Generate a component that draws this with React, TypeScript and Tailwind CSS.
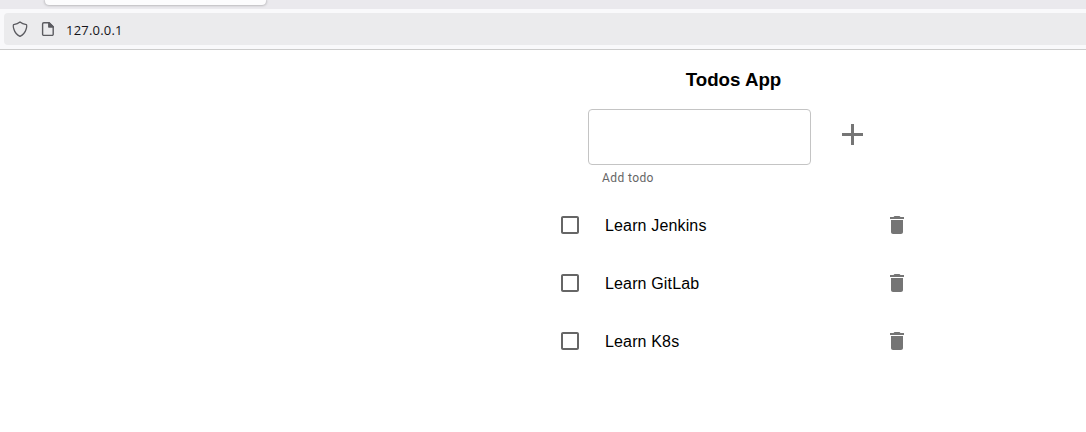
import React, { useState } from "react";

const initialTodos = ["Learn Jenkins", "Learn GitLab", "Learn K8s"];

function BrowserBar() {
  return (
    <header className="h-[50px] border-b border-[#cccccc] bg-[#f9f9fb]">
      <div className="flex h-[9px] bg-[#eae9ed] pl-[45px]">
        <div className="h-[5px] w-[221px] rounded-b-[4px] bg-[#fcfcfd] shadow-[0_0_3px_rgba(0,0,0,0.4)]" />
      </div>
      <div className="mt-1 ml-1 flex h-8 items-center rounded-l-[4px] bg-[#ebebed] pl-2">
        <svg className="h-4 w-4" viewBox="0 0 16 16" fill="none" stroke="#5b5b60" strokeWidth="1.3" strokeLinejoin="round">
          <path d="M8 .9C6.200 2.500 4.200 3.200 1.700 3.600C1.100 4.100 1.400 6.600 2 8.500c.9 3.100 3 5.500 6 6.900c3-1.400 5.100-3.800 6-6.900c.6-1.900.9-4.400.3-4.900C11.800 3.200 9.800 2.500 8 .9Z" />
        </svg>
        <svg className="ml-3 h-4 w-4" viewBox="0 0 16 16" fill="none" stroke="#5b5b60" strokeWidth="1.4" strokeLinejoin="round">
          <path d="M3.800 1.700h5.400l4 4v7.500a1.200 1.200 0 0 1-1.200 1.200H3.800a1.200 1.200 0 0 1-1.200-1.200V2.900a1.200 1.200 0 0 1 1.200-1.200Z" />
          <path d="M8.800 1.700v4.400h4.400Z" fill="#5b5b60" />
        </svg>
        <span className="mt-[3px] ml-[10px] font-['Open_Sans',sans-serif] text-[13px] tracking-[0.2px] text-[#15141a]">127.0.0.1</span>
      </div>
    </header>
  );
}

function TodoRow({ label }: { label: string }) {
  const [done, setDone] = useState(false);
  return (
    <li className="flex h-[58px] items-center">
      <button aria-label={label} onClick={() => setDone(!done)} className="h-6 w-6">
        <svg viewBox="0 0 24 24" fill="#666666">
          <path d="M19 5v14H5V5h14m0-2H5c-1.100 0-2 .900-2 2v14c0 1.100.900 2 2 2h14c1.100 0 2-.900 2-2V5c0-1.100-.900-2-2-2z" />
          {done && <path d="m10 17-5-5 1.400-1.400L10 14.200l7.600-7.600L19 8z" />}
        </svg>
      </button>
      <span className="mt-[2px] ml-[23px] w-[280px] text-[16px] tracking-[0.15px]">{label}</span>
      <button aria-label="Delete" className="h-6 w-6">
        <svg viewBox="0 0 24 24" fill="#757575">
          <path d="M6 19c0 1.100.900 2 2 2h8c1.100 0 2-.900 2-2V7H6v12zM19 4h-3.500l-1-1h-5l-1 1H5v2h14V4z" />
        </svg>
      </button>
    </li>
  );
}

export default function App() {
  return (
    <div className="h-[432px] overflow-hidden bg-white font-['Liberation_Sans',Arial,sans-serif] text-black">
      <BrowserBar />
      <main className="ml-[558px] w-[351px]">
        <h1 className="pt-[18px] text-center text-[18.72px] leading-6 font-bold">Todos App</h1>
        <div className="mt-[17px] ml-[30px] flex items-start">
          <div>
            <input aria-label="Add todo" className="block h-14 w-[223px] rounded-[4px] border border-[#c4c4c4] px-3.5 outline-none" />
            <p className="mt-[3px] ml-[14px] font-['Roboto',sans-serif] text-[12px] leading-5 tracking-[0.4px] text-[#666666]">Add todo</p>
          </div>
          <button aria-label="Add" className="mt-[8px] ml-[23px] h-9 w-9">
            <svg viewBox="-0.333 0.333 24 24" fill="#757575"><path d="M19 13h-6v6h-2v-6H5v-2h6V5h2v6h6v2z" /></svg>
          </button>
        </div>
        <ul className="mt-2">
          {initialTodos.map((label) => <TodoRow key={label} label={label} />)}
        </ul>
      </main>
    </div>
  );
}
